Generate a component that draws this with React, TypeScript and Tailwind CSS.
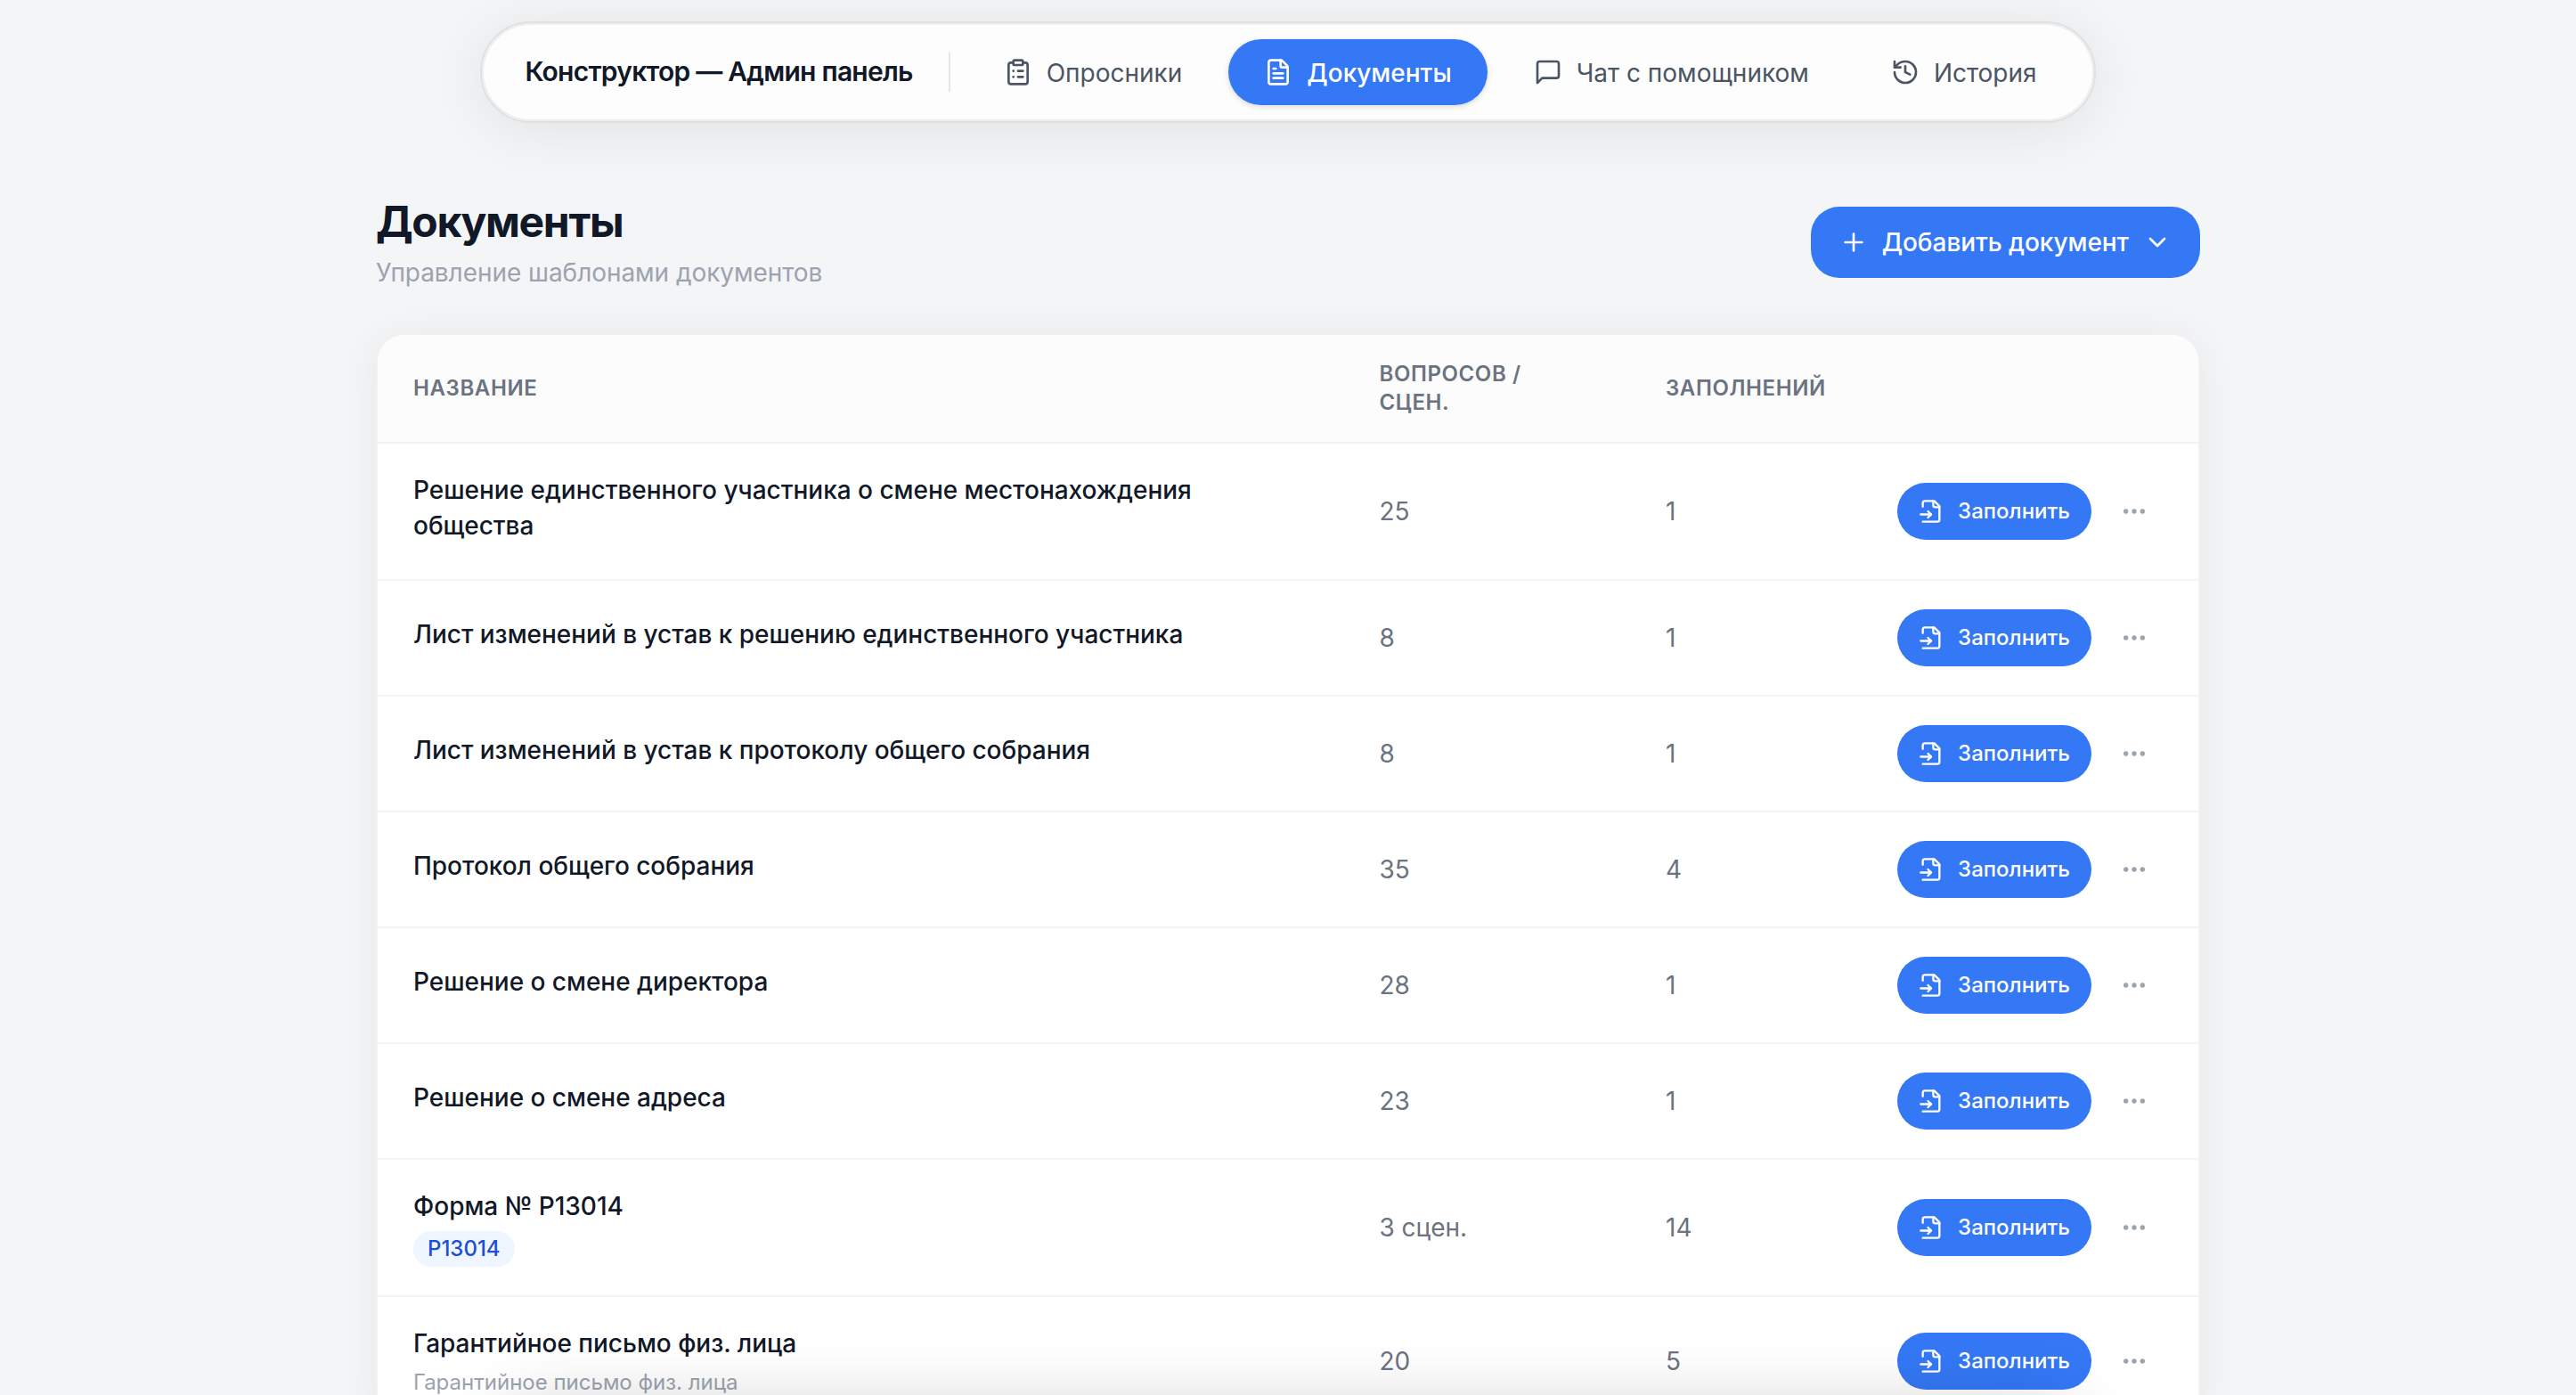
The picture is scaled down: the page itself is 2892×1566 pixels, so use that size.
import { ChevronDown, ClipboardList, Ellipsis, FileText, History, Plus } from 'lucide-react';
import type { ReactNode } from 'react';

type Doc = {
  name: string;
  questions: string;
  fills: number;
  badge?: string;
  description?: string;
};

const docs: Doc[] = [
  { name: 'Решение единственного участника о смене местонахождения общества', questions: '25', fills: 1 },
  { name: 'Лист изменений в устав к решению единственного участника', questions: '8', fills: 1 },
  { name: 'Лист изменений в устав к протоколу общего собрания', questions: '8', fills: 1 },
  { name: 'Протокол общего собрания', questions: '35', fills: 4 },
  { name: 'Решение о смене директора', questions: '28', fills: 1 },
  { name: 'Решение о смене адреса', questions: '23', fills: 1 },
  { name: 'Форма № Р13014', questions: '3 сцен.', fills: 14, badge: 'Р13014' },
  {
    name: 'Гарантийное письмо физ. лица',
    questions: '20',
    fills: 5,
    description: 'Гарантийное письмо физ. лица',
  },
];

function ChatIcon() {
  return (
    <svg viewBox="0 0 24 24" fill="none" stroke="currentColor" strokeWidth="2" strokeLinecap="round" strokeLinejoin="round" className="size-8">
      <path d="M21 15a2 2 0 0 1-2 2H7l-4 4V5a2 2 0 0 1 2-2h14a2 2 0 0 1 2 2z" />
    </svg>
  );
}

function FileInputIcon() {
  return (
    <svg viewBox="0 0 24 24" fill="none" stroke="currentColor" strokeWidth="2" strokeLinecap="round" strokeLinejoin="round" className="size-7 shrink-0">
      <path d="M4 7.5V4a2 2 0 0 1 2-2h9l5 5v13a2 2 0 0 1-2 2H4" />
      <path d="M14 2v4a2 2 0 0 0 2 2h4" />
      <path d="M2 15h10" />
      <path d="m9 18 3-3-3-3" />
    </svg>
  );
}

function NavItem({ icon, label, active = false }: { icon: ReactNode; label: string; active?: boolean }) {
  return (
    <button
      type="button"
      className={`flex h-[74px] items-center gap-4 rounded-full px-10 text-[28px] ${
        active
          ? 'bg-[#3478f6] font-medium text-white shadow-[0_2px_6px_rgba(0,0,0,0.14)]'
          : 'text-[#4b5563]'
      }`}
    >
      {icon}
      <span className="pt-0.5">{label}</span>
    </button>
  );
}

function DocRow({ doc }: { doc: Doc }) {
  return (
    <tr className="border-b-2 border-[#f3f4f5]">
      <td className="px-10 py-8">
        <div className="text-[28px]/10 font-medium tracking-[-0.02px] text-[#111827]">{doc.name}</div>
        <div className="pt-2">
          {doc.badge && (
            <div className="flex">
              <span className="flex h-10 items-center rounded-full bg-blue-50 px-4 text-2xl font-medium text-[#1d4ed8]">
                {doc.badge}
              </span>
            </div>
          )}
          {doc.description && <p className="text-2xl/8 text-[#9ca3af]">{doc.description}</p>}
        </div>
      </td>
      <td className="px-10 text-[28px]/10 tracking-[-0.05px] text-[#6b7280]">{doc.questions}</td>
      <td className="px-10 text-[28px]/10 text-[#6b7280]">{doc.fills}</td>
      <td className="px-10 py-8">
        <div className="flex items-center justify-end gap-4">
          <button type="button" className="flex h-16 items-center gap-4 rounded-full bg-[#3478f6] px-6 text-2xl font-medium text-white">
            <FileInputIcon />
            Заполнить
          </button>
          <button type="button" className="flex size-16 items-center justify-center rounded-full text-[#9ca3af]">
            <Ellipsis className="size-8" />
          </button>
        </div>
      </td>
    </tr>
  );
}

export default function App() {
  return (
    <div className="relative h-[1566px] overflow-hidden bg-[#f4f5f7] pt-6 font-['Inter',sans-serif] antialiased">
      <header className="flex justify-center">
        <nav className="flex h-[114px] items-center rounded-full border-2 border-[#dfe0e1] bg-[#fdfdfd] px-6 shadow-[inset_0_0_0_2px_#eeeeef,0_8px_64px_rgba(0,0,0,0.08)]">
          <span className="pr-10 pb-px pl-6 text-[30px] font-semibold tracking-tight text-[#111827]">
            Конструктор — Админ панель
          </span>
          <span className="mr-5 h-11 w-0.5 bg-[#e5e6e8]" />
          <div className="flex gap-3">
            <NavItem icon={<ClipboardList className="size-8" />} label="Опросники" />
            <NavItem icon={<FileText className="size-8" />} label="Документы" active />
            <NavItem icon={<ChatIcon />} label="Чат с помощником" />
            <NavItem icon={<History className="size-8" />} label="История" />
          </div>
        </nav>
      </header>

      <main className="mx-auto mt-[79px] w-[2048px]">
        <div className="flex items-center justify-between">
          <div>
            <h1 className="text-5xl/[64px] font-bold tracking-[-0.028em] text-[#111827]">Документы</h1>
            <p className="mt-[5px] mb-px text-[28px]/10 tracking-[-0.06px] text-[#9ca3af]">Управление шаблонами документов</p>
          </div>
          <button type="button" className="flex h-20 items-center gap-4 rounded-4xl bg-[#3478f6] px-8 text-[28px] font-medium tracking-[-0.05px] text-white">
            <Plus className="size-8" />
            Добавить документ
            <ChevronDown className="size-8" />
          </button>
        </div>

        <div className="mt-[47px] overflow-hidden rounded-4xl border-2 border-[#f1f1f2] bg-white bg-clip-padding shadow-[0_4px_48px_rgba(0,0,0,0.06)]">
          <table className="w-full table-fixed border-collapse">
            <colgroup>
              <col className="w-[1084.5px]" />
              <col className="w-[321.5px]" />
              <col className="w-[260px]" />
              <col />
            </colgroup>
            <thead>
              <tr className="border-b-2 border-[#f1f1f2] bg-[#fcfcfc] text-left text-2xl/8 tracking-wide text-[#6b7280] uppercase">
                <th className="px-10 py-7 font-semibold">Название</th>
                <th className="px-10 py-7 font-semibold">
                  Вопросов /<br />
                  сцен.
                </th>
                <th className="px-10 py-7 font-semibold">Заполнений</th>
                <th />
              </tr>
            </thead>
            <tbody>
              {docs.map((doc) => (
                <DocRow key={doc.name} doc={doc} />
              ))}
            </tbody>
          </table>
        </div>
      </main>

      {/* floating panel below the fold, only its shadow reaches the page */}
      <div className="pointer-events-none absolute top-full left-1/2 h-28 w-[1780px] -translate-x-1/2 rounded-full shadow-[0_16px_80px_rgba(0,0,0,0.21)]" />
    </div>
  );
}
